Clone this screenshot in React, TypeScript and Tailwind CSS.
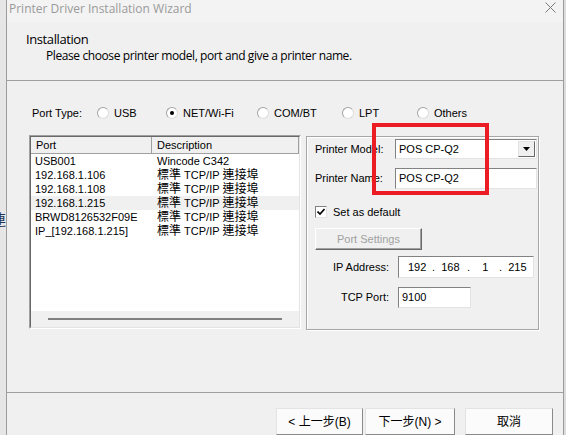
import { useState } from 'react';

const ports = [
    { port: 'USB001', desc: 'Wincode C342' },
    { port: '192.168.1.106', desc: '標準 TCP/IP 連接埠' },
    { port: '192.168.1.108', desc: '標準 TCP/IP 連接埠' },
    { port: '192.168.1.215', desc: '標準 TCP/IP 連接埠' },
    { port: 'BRWD8126532F09E', desc: '標準 TCP/IP 連接埠' },
    { port: 'IP_[192.168.1.215]', desc: '標準 TCP/IP 連接埠' },
];

const portTypes = [
    { label: 'USB', w: 'w-[69px]' },
    { label: 'NET/Wi-Fi', w: 'w-[91px]' },
    { label: 'COM/BT', w: 'w-[85px]' },
    { label: 'LPT', w: 'w-[75px]' },
    { label: 'Others', w: 'w-[70px]' },
];

// CJK glyphs sit a touch larger than the latin text in the list
const Desc = ({ text }: { text: string }) => (
    <span>
        {text.split(/([\u4e00-\u9fff]+)/).map((part, i) =>
            /[\u4e00-\u9fff]/.test(part) ? (
                <span key={i} className="text-[12px]">{part}</span>
            ) : (
                <span key={i}>{part}</span>
            )
        )}
    </span>
);

const Radio = ({ checked }: { checked: boolean }) => (
    <span className="flex h-[12px] w-[12px] items-center justify-center rounded-full border border-[#a3a3a3] border-b-[#dcdcdc] border-r-[#dcdcdc] bg-white">
        {checked && <span className="h-[4px] w-[4px] rounded-full bg-black" />}
    </span>
);

const Field = ({ className, children }: { className: string; children?: React.ReactNode }) => (
    <div className={`flex items-center border border-[#828282] border-b-[#e3e3e3] border-r-[#e3e3e3] bg-white ${className}`}>
        {children}
    </div>
);

export default function App() {
    const [selected] = useState(1);

    return (
        <div className="relative flex h-[435px] w-[566px] overflow-hidden bg-[#e6e6e6] font-['Liberation_Sans','Noto_Sans_CJK_TC',sans-serif] text-[11px] text-black">
            {/* window behind, cut off */}
            <div className="w-[6px] overflow-hidden">
                <div className="-ml-[9px] mt-[212px] text-[15px] leading-[16px] text-[#1d3557]">連</div>
            </div>

            <div className="flex w-[558px] flex-col border-x border-[#9c9c9c] bg-[#f0f0f0]">
                {/* title bar */}
                <div className="flex h-[22px] items-center justify-between bg-[#f3f3f3] pl-[2px] pr-[7px] font-['Open_Sans',sans-serif] text-[12px] text-[#9a9a9a]">
                    <span className="-mt-[4px]">Printer Driver Installation Wizard</span>
                    <svg width="11" height="11" viewBox="0 0 11 11" className="-mt-[8px]">
                        <path d="M0.5 0.5L10.5 10.5M10.5 0.5L0.5 10.5" stroke="#7a7a7a" strokeWidth="1" />
                    </svg>
                </div>

                {/* header */}
                <div className="h-[58px] pl-[19px] pt-[9px] font-['Open_Sans',sans-serif] tracking-[-0.4px]">
                    <div className="text-[13px] leading-[17px]">Installation</div>
                    <div className="pl-[20px] text-[12px] leading-[16px]">Please choose printer model, port and give a printer name.</div>
                </div>
                <div className="h-px bg-[#a0a0a0]" />

                {/* body */}
                <div className="flex h-[311px] flex-col pl-[22px] pt-[25px]">
                    <div className="flex h-[14px] items-center pl-[3px]">
                        <span className="w-[65px]">Port Type:</span>
                        {portTypes.map((p, i) => (
                            <div key={p.label} className={`flex items-center gap-[5px] ${p.w}`}>
                                <Radio checked={i === selected} />
                                <span>{p.label}</span>
                            </div>
                        ))}
                    </div>

                    <div className="mt-[15px] flex gap-[5px]">
                        {/* port list */}
                        <div className="h-[194px] w-[272px] border border-[#a0a0a0] border-b-white border-r-white">
                            <div className="flex h-full flex-col border border-[#696969] border-b-[#e3e3e3] border-r-[#e3e3e3] bg-white">
                                <div className="flex h-[17px] bg-[#f0f0f0]">
                                    <div className="flex w-[121px] items-center border-b border-r border-[#a0a0a0] pl-[5px]">Port</div>
                                    <div className="flex flex-1 items-center border-b border-r border-[#a0a0a0] pl-[5px]">Description</div>
                                </div>
                                <div className="flex-1">
                                    {ports.map((p, i) => (
                                        <div key={p.port} className={`flex h-[14px] items-center ${i === 3 ? 'bg-[#f0f0f0]' : ''}`}>
                                            <span className="w-[126px] pl-[4px]">{p.port}</span>
                                            <Desc text={p.desc} />
                                        </div>
                                    ))}
                                </div>
                                <div className="flex h-[16px] items-center bg-[#f0f0f0] pl-[17px]">
                                    <div className="h-[2px] w-[234px] bg-[#808080]" />
                                </div>
                            </div>
                        </div>

                        {/* printer settings group */}
                        <div className="mt-px h-[194px] w-[233px] border border-[#a6a6a6] shadow-[inset_1px_1px_0_#ffffff,1px_1px_0_#ffffff]">
                            <div className="flex flex-col pl-[8px] pt-[2px]">
                                <div className="flex h-[20px] items-center">
                                    <span className="w-[80px]">Printer Model:</span>
                                    <Field className="h-[20px] w-[142px] justify-between pl-[3px] pr-px">
                                        <span>POS CP-Q2</span>
                                        <span className="flex h-[16px] w-[17px] items-center justify-center border border-[#e3e3e3] border-b-[#696969] border-r-[#696969] bg-[#f0f0f0]">
                                            <svg width="7" height="4" viewBox="0 0 7 4">
                                                <path d="M0 0H7L3.5 4Z" fill="#000" />
                                            </svg>
                                        </span>
                                    </Field>
                                </div>
                                <div className="mt-[9px] flex h-[21px] items-center">
                                    <span className="w-[80px]">Printer Name:</span>
                                    <Field className="h-[21px] w-[142px] pl-[3px]">
                                        <span>POS CP-Q2</span>
                                    </Field>
                                </div>
                                <div className="mt-[16px] flex h-[14px] items-center gap-[6px]">
                                    <span className="flex h-[12px] w-[12px] items-center justify-center border border-[#828282] border-b-[#e3e3e3] border-r-[#e3e3e3] bg-white">
                                        <svg width="8" height="8" viewBox="0 0 8 8">
                                            <path d="M0.5 3.5L3 6L7.5 1" stroke="#000" strokeWidth="1.6" fill="none" />
                                        </svg>
                                    </span>
                                    <span>Set as default</span>
                                </div>
                                <div className="mt-[9px] flex h-[22px] w-[107px] items-center justify-center border border-white border-b-[#696969] border-r-[#696969] bg-[#f0f0f0] text-[#a0a0a0] shadow-[inset_-1px_-1px_0_#a0a0a0]">
                                    Port Settings
                                </div>
                                <div className="mt-[6px] flex h-[22px] items-center">
                                    <span className="w-[74px] text-right">IP Address:</span>
                                    <Field className="ml-[9px] h-[22px] w-[136px]">
                                        <span className="w-[33px] pl-[9px]">192</span>
                                        <span className="w-[35px]">.&nbsp; 168</span>
                                        <span className="w-[32px]">.&nbsp;&nbsp;&nbsp; 1</span>
                                        <span>.&nbsp; 215</span>
                                    </Field>
                                </div>
                                <div className="mt-[9px] flex h-[21px] items-center">
                                    <span className="w-[74px] text-right">TCP Port:</span>
                                    <Field className="ml-[9px] h-[21px] w-[73px] pl-[3px]">
                                        9100
                                    </Field>
                                </div>
                            </div>
                        </div>
                    </div>
                </div>
                <div className="h-px bg-[#a0a0a0]" />

                {/* footer */}
                <div className="flex flex-1 items-start pl-[269px] pt-[15px] text-[12px]">
                    <button className="flex h-[27px] w-[87px] items-center justify-center border border-[#e3e3e3] border-b-[#8a8a8a] border-r-[#8a8a8a] bg-[#fbfbfb]">
                        &lt; 上一步(B)
                    </button>
                    <button className="ml-[2px] flex h-[27px] w-[90px] items-center justify-center border border-[#e3e3e3] border-b-[#8a8a8a] border-r-[#8a8a8a] bg-[#fbfbfb]">
                        下一步(N) &gt;
                    </button>
                    <button className="ml-[10px] flex h-[27px] w-[88px] items-center justify-center border border-[#e3e3e3] border-b-[#8a8a8a] border-r-[#8a8a8a] bg-[#fbfbfb]">
                        取消
                    </button>
                </div>
            </div>
            <div className="flex-1 bg-[#dcdcdc]" />

            {/* red annotation box */}
            <div className="absolute left-[372px] top-[123px] h-[72px] w-[117px] border-4 border-[#ec1c24]" />
        </div>
    );
}
